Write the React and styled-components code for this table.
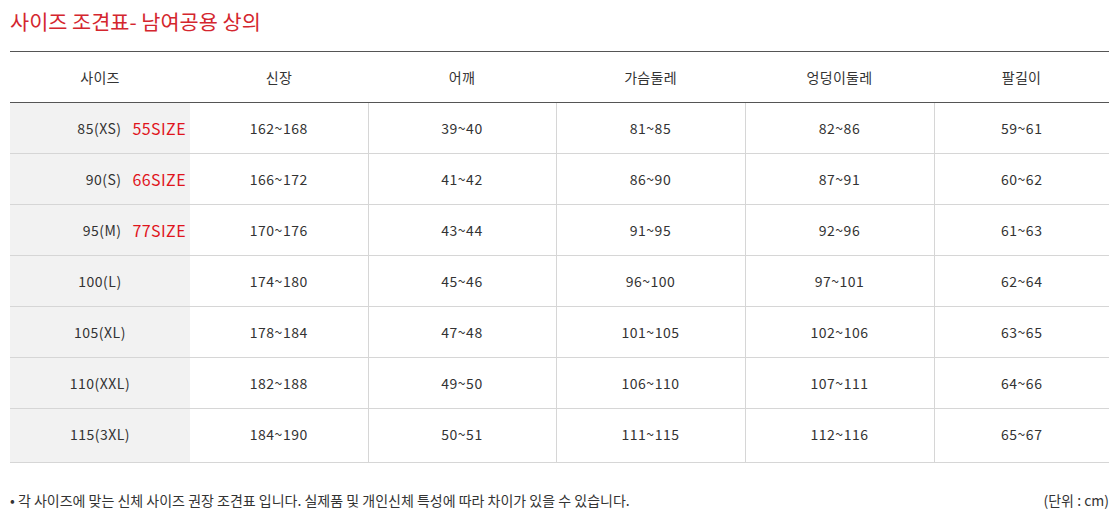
import React from "react";
import styled, { createGlobalStyle } from "styled-components";

const GlobalStyle = createGlobalStyle`
  body {
    margin: 0;
    background: #fff;
    font-family: "Noto Sans CJK KR", "Noto Sans", sans-serif;
    color: #333;
  }
`;

const headers = ["사이즈", "신장", "어깨", "가슴둘레", "엉덩이둘레", "팔길이"];

const rows = [
  { size: "85(XS)", tag: "55SIZE", values: ["162~168", "39~40", "81~85", "82~86", "59~61"] },
  { size: "90(S)", tag: "66SIZE", values: ["166~172", "41~42", "86~90", "87~91", "60~62"] },
  { size: "95(M)", tag: "77SIZE", values: ["170~176", "43~44", "91~95", "92~96", "61~63"] },
  { size: "100(L)", values: ["174~180", "45~46", "96~100", "97~101", "62~64"] },
  { size: "105(XL)", values: ["178~184", "47~48", "101~105", "102~106", "63~65"] },
  { size: "110(XXL)", values: ["182~188", "49~50", "106~110", "107~111", "64~66"] },
  { size: "115(3XL)", values: ["184~190", "50~51", "111~115", "112~116", "65~67"] },
];

const colWidths = [180, 178, 188, 189, 189, 175];

function App() {
  return (
    <Page>
      <GlobalStyle />
      <Title>사이즈 조견표- 남여공용 상의</Title>
      <Table>
        <colgroup>
          {colWidths.map((w, i) => (
            <col key={i} style={{ width: w }} />
          ))}
        </colgroup>
        <thead>
          <tr>
            {headers.map((h) => (
              <HeadCell key={h}>{h}</HeadCell>
            ))}
          </tr>
        </thead>
        <tbody>
          {rows.map((r) => (
            <Row key={r.size}>
              <SizeCell>
                {r.tag ? (
                  <SizeWrap>
                    <span>{r.size}</span>
                    <Tag>{r.tag}</Tag>
                  </SizeWrap>
                ) : (
                  r.size
                )}
              </SizeCell>
              {r.values.map((v, i) => (
                <Cell key={i} $divider={i > 0}>
                  {v}
                </Cell>
              ))}
            </Row>
          ))}
        </tbody>
      </Table>
      <Notes>
        <Note>• 각 사이즈에 맞는 신체 사이즈 권장 조견표 입니다. 실제품 및 개인신체 특성에 따라 차이가 있을 수 있습니다.</Note>
        <Note>(단위 : cm)</Note>
      </Notes>
    </Page>
  );
}

export default App;

const Page = styled.div`
  padding: 7px 9px 0 10px;
`;

const Title = styled.h2`
  margin: 0;
  font-size: 20.8px;
  line-height: 28px;
  font-weight: 400;
  color: #d4262e;
`;

const Table = styled.table`
  width: 100%;
  margin-top: 16px;
  border-collapse: collapse;
  table-layout: fixed;
  border-top: 1px solid #555;
  border-bottom: 1px solid #cfcfcf;
`;

const HeadCell = styled.th`
  height: 50px;
  padding: 0;
  font-size: 14px;
  font-weight: 400;
  color: #333;
  text-align: center;
  letter-spacing: 0.3px;
  border-bottom: 1px solid #555;
`;

const Cell = styled.td`
  height: 50px;
  padding: 0;
  font-size: 14px;
  letter-spacing: 0.5px;
  color: #333;
  text-align: center;
  border-bottom: 1px solid #d6d6d6;
  border-left: ${(p) => (p.$divider ? "1px solid #d6d6d6" : "none")};
`;

const Row = styled.tr`
  &:last-child td {
    padding-bottom: 3px;
  }
`;

const SizeCell = styled(Cell)`
  background: #f2f2f2;
`;

const SizeWrap = styled.div`
  display: flex;
  justify-content: flex-end;
  align-items: center;
  gap: 11px;
  padding-right: 4px;
`;

const Tag = styled.span`
  font-size: 16px;
  letter-spacing: 0.4px;
  color: #e0141c;
`;

const Notes = styled.div`
  display: flex;
  justify-content: space-between;
  align-items: center;
  margin-top: 27px;
`;

const Note = styled.span`
  font-size: 14px;
  line-height: 20px;
  color: #333;
`;
